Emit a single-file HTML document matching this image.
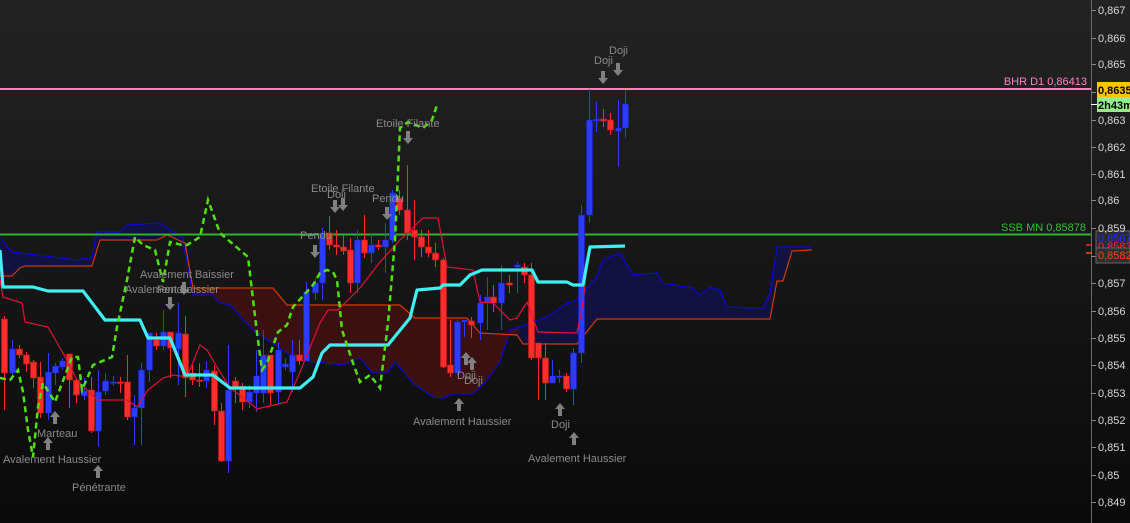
<!DOCTYPE html>
<html><head><meta charset="utf-8">
<style>
html,body{margin:0;padding:0;width:1130px;height:523px;overflow:hidden;background:#161616;}
svg{display:block;font-family:"Liberation Sans",Arial,sans-serif;}
.a{fill:#8a8a8a;font-size:11px;}
.ax{fill:#d8d8d8;font-size:11px;}
</style></head><body>
<svg id="s" width="1130" height="523" xmlns="http://www.w3.org/2000/svg">
<defs>
<linearGradient id="bg" x1="0" y1="0" x2="0" y2="1">
<stop offset="0" stop-color="#232323"/><stop offset="1" stop-color="#0a0a0a"/>
</linearGradient>
<clipPath id="cb1"><rect x="0" y="0" width="192" height="523"/><rect x="518" y="0" width="400" height="523"/></clipPath>
<clipPath id="cr"><rect x="192" y="0" width="326" height="523"/></clipPath>
<path id="dn" d="M-2,-7 h4 v7 h3 l-5,6 l-5,-6 h3 z" fill="#808080"/>
<path id="up" d="M-2,7 h4 v-7 h3 l-5,-6 l-5,6 h3 z" fill="#808080"/>
</defs>
<rect width="1130" height="523" fill="url(#bg)"/>

<!-- cloud fills -->
<polygon clip-path="url(#cb1)" fill="#12124a" fill-opacity="0.85" points="0,238 12,252 77,260 92,257 97,232 120,232 127,225 160,223 173,232 182,237 193,295 213,295 220,303 230,305 253,330 263,337 287,353 300,360 317,362 343,365 360,358 372,373 387,373 395,362 413,383 433,397 443,398 453,394 473,394 487,380 500,362 510,330 520,327 533,322 547,317 567,303 577,300 597,277 603,260 620,253 633,275 657,273 662,283 693,288 700,295 710,287 720,290 727,307 763,308 770,293 777,247 812,247 812,250 792,251 783,281 777,281 770,319 597,319 577,344 523,344 517,335 480,333 467,318 415,318 400,305 287,305 273,288 193,288 185,243 167,235 157,240 100,240 92,266 25,266 20,268 12,276 0,276"/>
<polygon clip-path="url(#cr)" fill="#3a1010" points="0,238 12,252 77,260 92,257 97,232 120,232 127,225 160,223 173,232 182,237 193,295 213,295 220,303 230,305 253,330 263,337 287,353 300,360 317,362 343,365 360,358 372,373 387,373 395,362 413,383 433,397 443,398 453,394 473,394 487,380 500,362 510,330 520,327 533,322 547,317 567,303 577,300 597,277 603,260 620,253 633,275 657,273 662,283 693,288 700,295 710,287 720,290 727,307 763,308 770,293 777,247 812,247 812,250 792,251 783,281 777,281 770,319 597,319 577,344 523,344 517,335 480,333 467,318 415,318 400,305 287,305 273,288 193,288 185,243 167,235 157,240 100,240 92,266 25,266 20,268 12,276 0,276"/>
<polyline fill="none" stroke="#0a0ad0" stroke-width="1.2" points="0,238 12,252 77,260 92,257 97,232 120,232 127,225 160,223 173,232 182,237 193,295 213,295 220,303 230,305 253,330 263,337 287,353 300,360 317,362 343,365 360,358 372,373 387,373 395,362 413,383 433,397 443,398 453,394 473,394 487,380 500,362 510,330 520,327 533,322 547,317 567,303 577,300 597,277 603,260 620,253 633,275 657,273 662,283 693,288 700,295 710,287 720,290 727,307 763,308 770,293 777,247 812,247"/>
<polyline fill="none" stroke="#d03a00" stroke-width="1.2" points="0,276 12,276 20,268 25,266 92,266 100,240 157,240 167,235 185,243 193,288 273,288 287,305 400,305 415,318 467,318 480,333 517,335 523,344 577,344 597,319 770,319 777,281 783,281 792,251 812,250"/>

<!-- horizontal lines -->
<line x1="0" y1="89" x2="1091" y2="89" stroke="#ff80c0" stroke-width="2"/>
<line x1="0" y1="234.5" x2="1091" y2="234.5" stroke="#30b030" stroke-width="2"/>
<text x="1087" y="85" text-anchor="end" style="fill:#ff80c0;font-size:11px">BHR D1 0,86413</text>
<text x="1086" y="231" text-anchor="end" style="fill:#30c030;font-size:11px">SSB MN 0,85878</text>

<g id="candles"></g>

<!-- tenkan -->
<polyline fill="none" stroke="#e0103a" stroke-width="1.2" points="0,280 3,297 22,303 25,322 48,327 67,360 77,380 97,400 127,400 137,407 148,390 163,378 173,375 187,377 200,345 207,350 217,367 230,388 250,403 257,409 287,402 300,372 320,323 328,310 338,310 360,288 380,262 400,240 423,218 438,218 447,267 473,270 480,302 493,303 510,320 517,318 527,302 538,332 577,333 583,303 586,275"/>
<!-- kijun -->
<polyline fill="none" stroke="#40f0f0" stroke-width="3.2" stroke-linejoin="round" points="0,250 3,287 33,287 48,291 83,291 105,320 140,320 148,338 170,338 185,375 213,375 230,388 300,388 313,377 322,353 330,345 388,345 410,318 417,290 440,288 443,285 460,285 470,275 482,270 532,270 538,282 567,282 573,285 583,285 590,247 625,246"/>
<!-- chikou -->
<polyline fill="none" stroke="#50e010" stroke-width="2.5" stroke-dasharray="6,4" points="0,378 10,380 18,370 23,392 28,430 33,457 38,407 43,383 55,402 72,357 78,357 82,390 93,365 112,357 117,327 127,280 135,237 143,245 155,250 163,282 170,242 182,245 187,245 200,237 208,200 220,233 248,257 257,333 262,370 267,363 278,332 287,325 293,307 313,285 320,273 327,270 333,272 337,280 342,330 353,363 360,382 370,375 380,388 388,323 395,240 400,128 408,122 423,128 432,120 437,105"/>

<!-- annotations -->
<text class="a" x="376" y="127">Etoile Filante</text><use href="#dn" x="408" y="138"/>
<text class="a" x="311" y="192">Etoile Filante</text>
<text class="a" x="327" y="198">Doji</text><use href="#dn" x="335" y="207"/><use href="#dn" x="343" y="205"/>
<text class="a" x="372" y="202">Pendu</text><use href="#dn" x="387" y="214"/>
<text class="a" x="300" y="239">Pendu</text><use href="#dn" x="315" y="252"/>
<text class="a" x="140" y="278">Avalement Baissier</text><use href="#dn" x="184" y="289"/>
<text class="a" x="125" y="293">Avalement Baissier</text><text class="a" x="157" y="293">Pendu</text><use href="#dn" x="170" y="304"/>
<text class="a" x="37" y="437">Marteau</text><use href="#up" x="55" y="417"/>
<use href="#up" x="48" y="443"/>
<text class="a" x="3" y="463">Avalement Haussier</text>
<use href="#up" x="98" y="471"/>
<text class="a" x="72" y="491">Pénétrante</text>
<use href="#up" x="466" y="358"/><use href="#up" x="472" y="363"/>
<text class="a" x="457" y="379">Doji</text><text class="a" x="464" y="384">Doji</text>
<use href="#up" x="459" y="404"/>
<text class="a" x="413" y="425">Avalement Haussier</text>
<use href="#up" x="560" y="409"/>
<text class="a" x="551" y="428">Doji</text>
<use href="#up" x="574" y="438"/>
<text class="a" x="528" y="462">Avalement Haussier</text>
<text class="a" x="609" y="54">Doji</text><use href="#dn" x="618" y="70"/>
<text class="a" x="594" y="64">Doji</text><use href="#dn" x="603" y="78"/>

<!-- axis -->
<line x1="1091.5" y1="0" x2="1091.5" y2="523" stroke="#6a6a6a"/>
<g id="ticks"></g>
<rect x="1097" y="82" width="33" height="15" fill="#ffc400"/>
<text x="1098" y="94" style="fill:#000;font-size:11px;font-weight:bold">0,8635</text>
<rect x="1097" y="97" width="33" height="15" fill="#98ec8c"/>
<text x="1098" y="109" style="fill:#000;font-size:11px;font-weight:bold">2h43m</text>
<line x1="1091" y1="104.5" x2="1097" y2="104.5" stroke="#fff"/>
<rect x="1096" y="231" width="34" height="32" fill="#2a2a2a" stroke="#666"/>
<text x="1098" y="242" style="fill:#2030ff;font-size:11px">0,8587</text>
<text x="1098" y="250" style="fill:#ff2040;font-size:11px">0,8583</text>
<rect x="1096" y="248" width="34" height="15" fill="#2e2e2e" stroke="#666"/>
<text x="1098" y="259" style="fill:#ff4010;font-size:11px">0,8582</text>
<line x1="1086" y1="245" x2="1092" y2="245" stroke="#ff2040" stroke-width="1.5"/>
<line x1="1086" y1="253" x2="1092" y2="253" stroke="#ff5010" stroke-width="1.5"/>

<text class="ax" x="1098" y="14">0,867</text>
<text class="ax" x="1098" y="42">0,866</text>
<text class="ax" x="1098" y="68">0,865</text>
<text class="ax" x="1098" y="124">0,863</text>
<text class="ax" x="1098" y="151">0,862</text>
<text class="ax" x="1098" y="178">0,861</text>
<text class="ax" x="1098" y="204">0,86</text>
<text class="ax" x="1098" y="232">0,859</text>
<text class="ax" x="1098" y="287">0,857</text>
<text class="ax" x="1098" y="315">0,856</text>
<text class="ax" x="1098" y="342">0,855</text>
<text class="ax" x="1098" y="369">0,854</text>
<text class="ax" x="1098" y="397">0,853</text>
<text class="ax" x="1098" y="424">0,852</text>
<text class="ax" x="1098" y="451">0,851</text>
<text class="ax" x="1098" y="479">0,85</text>
<text class="ax" x="1098" y="506">0,849</text>
</svg>
<script>
var C=[
[4,319,373,316,410,'r'],[12,349,373,340,380,'b'],[19,349,355,345,358,'r'],[26,355,364,352,372,'r'],[33,362,378,360,388,'r'],[40,377,413,362,418,'r'],[48,372,413,353,420,'b'],[55,366,373,363,385,'b'],[62,361,367,358,370,'b'],[69,354,380,355,408,'r'],[76,380,395,378,403,'r'],[84,391,396,378,400,'b'],[91,390,431,377,433,'r'],[98,392,431,370,447,'b'],[105,381,391,373,395,'b'],[113,382,383,376,386,'b'],[120,382,383,377,393,'r'],
[127,382,417,355,420,'r'],[134,408,417,395,445,'b'],[141,370,408,363,445,'b'],[149,333,370,333,382,'b'],[156,340,346,333,350,'r'],[163,332,346,310,350,'b'],[170,332,348,332,378,'r'],[178,333,349,303,385,'b'],[185,334,378,316,397,'r'],[192,373,380,365,385,'r'],[199,380,381,363,387,'r'],[206,370,381,361,388,'b'],[214,371,411,365,425,'r'],[221,411,461,403,462,'r'],[228,390,461,345,473,'b'],[235,381,389,377,403,'r'],[242,386,402,383,410,'r'],[249,392,402,385,408,'b'],[256,376,393,350,412,'b'],[263,355,393,330,403,'b'],[270,355,393,355,405,'r'],[278,350,392,342,403,'b'],[285,364,367,358,370,'b'],[292,355,372,340,392,'b'],[299,355,361,340,365,'r'],[306,292,361,282,361,'b'],[315,283,293,278,300,'b'],
[322,233,283,228,300,'b'],[329,233,245,216,250,'r'],[336,245,247,230,255,'r'],[343,247,251,235,255,'r'],[350,250,283,238,293,'r'],[357,240,283,230,293,'b'],[364,240,253,215,258,'r'],[371,245,253,233,263,'b'],[378,245,247,240,250,'r'],[385,240,247,223,273,'b'],[392,193,240,190,243,'b'],[399,198,210,190,215,'r'],[407,210,233,165,240,'r'],[414,230,237,200,260,'r'],[421,237,247,230,257,'r'],[428,247,253,230,257,'r'],[435,253,260,243,267,'r'],[443,260,367,258,368,'r'],[450,365,373,320,377,'r'],[457,322,373,320,375,'b'],[464,320,322,320,337,'b'],[471,321,325,317,338,'r'],[480,303,323,295,340,'b'],[487,297,303,277,330,'b'],[493,297,303,285,312,'r'],[501,283,303,265,330,'b'],[509,283,285,275,293,'r'],[517,265,267,262,293,'b'],[524,267,275,263,283,'r'],[531,275,358,263,360,'r'],[538,343,358,343,400,'r'],[545,358,383,343,400,'r'],[552,376,383,360,383,'b'],[559,376,377,370,383,'b'],[566,376,389,373,392,'r'],[573,353,389,348,405,'b'],[581,215,353,205,363,'b'],[589,120,215,89,223,'b'],[596,119,121,102,132,'b'],[603,119,121,109,127,'r'],[610,120,130,113,135,'r'],[618,128,131,100,167,'b'],[625,104,128,90,138,'b']];
var g=document.getElementById('candles'),h='';
C.forEach(function(c){var col=c[5]=='r'?'#ff2c2c':'#2c3cff';var bh=Math.max(c[2]-c[1],1.5);
h+='<line x1="'+(c[0]+0.5)+'" y1="'+c[3]+'" x2="'+(c[0]+0.5)+'" y2="'+c[4]+'" stroke="'+col+'" stroke-width="1"/>';
h+='<rect x="'+(c[0]-2.5)+'" y="'+c[1]+'" width="6" height="'+bh+'" fill="'+col+'" stroke="'+(c[5]=='r'?'#c01818':'#1820c0')+'" stroke-width="0.6"/>';});
g.innerHTML=h;
var t='',ys=[10,38,64,92,120,147,174,200,228,256,283,311,338,365,393,420,447,475,502];
ys.forEach(function(y){t+='<line x1="1091" y1="'+(y+0.5)+'" x2="1096" y2="'+(y+0.5)+'" stroke="#888"/>';});
document.getElementById('ticks').innerHTML=t;
</script>
</body></html>
